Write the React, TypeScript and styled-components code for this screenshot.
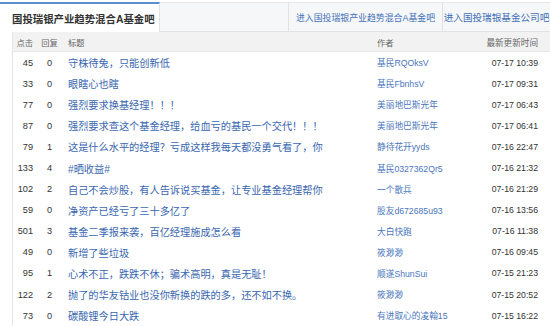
import React from "react";
import styled, { createGlobalStyle } from "styled-components";

const Global = createGlobalStyle`
  html, body { margin: 0; padding: 0; background: #fff; }
  body { font-family: "Liberation Sans", "Noto Sans CJK SC", sans-serif; color: #333; }
`;

const Page = styled.div`
  width: 550px;
  height: 326px;
  overflow: hidden;
  padding-top: 2px;
  box-sizing: border-box;
`;

const TabBar = styled.div`
  display: flex;
  height: 30px;
  background: #f6f7f9;
  border-top: 1px solid #e8e8e8;
  border-bottom: 1px solid #e2e2e2;
  box-sizing: border-box;
`;

const ActiveTab = styled.div`
  width: 160px;
  flex: none;
  box-sizing: border-box;
  background: #fff;
  border-top: 2px solid #5b8fd0;
  margin-top: -1px;
  margin-bottom: -1px;
  border-right: 1px solid #e2e2e2;
  display: flex;
  align-items: center;
  padding-left: 12px;
  font-size: 10.4px;
  font-weight: bold;
  color: #333;
`;

const Spacer = styled.div`
  flex: 1;
`;

const TabLink = styled.a<{ $w: number; $fs: number }>`
  width: ${(p) => p.$w}px;
  flex: none;
  box-sizing: border-box;
  border-left: 1px solid #e2e2e2;
  display: flex;
  align-items: center;
  justify-content: center;
  font-size: ${(p) => p.$fs}px;
  color: #3f6fb6;
  text-decoration: none;
  white-space: nowrap;
`;

const Table = styled.div`
  margin-left: 12px;
  border-left: 1px solid #e6e6e6;
`;

const Row = styled.div<{ $head?: boolean }>`
  display: grid;
  grid-template-columns: 20px 33px 311px 109px 64px;
  height: ${(p) => (p.$head ? 20 : 21.1)}px;
  align-items: center;
  background: ${(p) => (p.$head ? "#f2f2f2" : "#fff")};
  border-bottom: ${(p) => (p.$head ? "1px solid #e6e6e6" : "none")};
  box-sizing: border-box;
  white-space: nowrap;
`;

const Num = styled.span<{ $head?: boolean }>`
  text-align: right;
  font-size: ${(p) => (p.$head ? 8.3 : 9.2)}px;
  color: ${(p) => (p.$head ? "#666" : "#333")};
`;

const Reply = styled.span<{ $head?: boolean }>`
  text-align: center;
  font-size: ${(p) => (p.$head ? 8.3 : 9.2)}px;
  color: ${(p) => (p.$head ? "#666" : "#333")};
`;

const Title = styled.span<{ $head?: boolean }>`
  padding-left: 2px;
  font-size: ${(p) => (p.$head ? 8.3 : 10.2)}px;
  color: ${(p) => (p.$head ? "#666" : "#3a67b1")};
  overflow: hidden;
`;

const Author = styled.span<{ $head?: boolean }>`
  font-size: ${(p) => (p.$head ? 8.3 : 8.7)}px;
  color: ${(p) => (p.$head ? "#666" : "#4a76bd")};
  overflow: hidden;
`;

const Time = styled.span<{ $head?: boolean }>`
  text-align: right;
  padding-right: 12px;
  font-size: ${(p) => (p.$head ? 8.6 : 8.7)}px;
  color: ${(p) => (p.$head ? "#666" : "#333")};
`;

const rows = [
  ["45", "0", "守株待兔，只能创新低", "基民RQOksV", "07-17 10:39"],
  ["33", "0", "眼瞎心也瞎", "基民FbnhsV", "07-17 09:31"],
  ["77", "0", "强烈要求换基经理！！！", "美丽地巴斯光年", "07-17 06:43"],
  ["87", "0", "强烈要求查这个基金经理，给血亏的基民一个交代！！！", "美丽地巴斯光年", "07-17 06:41"],
  ["79", "1", "这是什么水平的经理？亏成这样我每天都没勇气看了，你", "静待花开yyds", "07-16 22:47"],
  ["133", "4", "#晒收益#", "基民0327362Qr5", "07-16 21:32"],
  ["102", "2", "自己不会炒股，有人告诉说买基金，让专业基金经理帮你", "一个散兵", "07-16 21:29"],
  ["59", "0", "净资产已经亏了三十多亿了", "股友d672685u93", "07-16 13:56"],
  ["501", "3", "基金二季报来袭，百亿经理施成怎么看", "大白快跑", "07-16 11:38"],
  ["49", "0", "新增了些垃圾", "筱渺渺", "07-16 09:45"],
  ["95", "1", "心术不正，跌跌不休；骗术高明，真是无耻！", "顺遂ShunSui", "07-15 21:23"],
  ["122", "2", "抛了的华友钴业也没你新换的跌的多，还不如不换。", "筱渺渺", "07-15 20:52"],
  ["73", "0", "碳酸锂今日大跌", "有进取心的凌翰15", "07-15 16:22"],
];

export default function App() {
  return (
    <Page>
      <Global />
      <TabBar>
        <ActiveTab>国投瑞银产业趋势混合A基金吧</ActiveTab>
        <Spacer />
        <TabLink $w={154} $fs={8.9}>进入国投瑞银产业趋势混合A基金吧</TabLink>
        <TabLink $w={108} $fs={9.6}>进入国投瑞银基金公司吧</TabLink>
      </TabBar>
      <Table>
        <Row $head>
          <Num $head>点击</Num>
          <Reply $head>回复</Reply>
          <Title $head>标题</Title>
          <Author $head>作者</Author>
          <Time $head>最新更新时间</Time>
        </Row>
        {rows.map((r, i) => (
          <Row key={i}>
            <Num>{r[0]}</Num>
            <Reply>{r[1]}</Reply>
            <Title>{r[2]}</Title>
            <Author>{r[3]}</Author>
            <Time>{r[4]}</Time>
          </Row>
        ))}
      </Table>
    </Page>
  );
}
